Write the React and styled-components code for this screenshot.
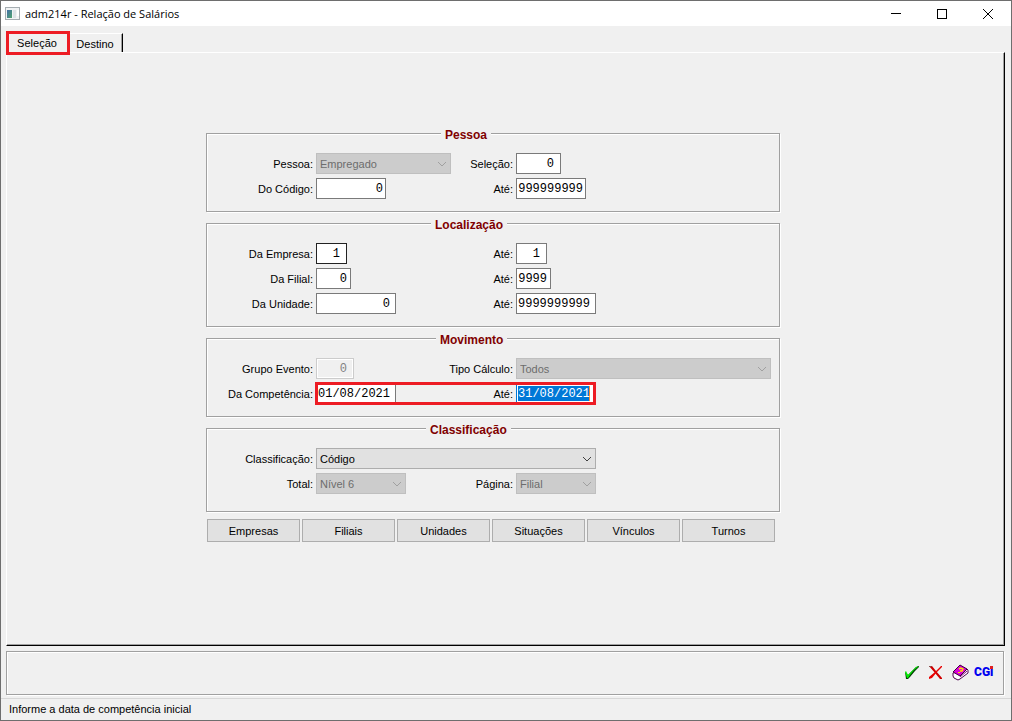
import styled, { createGlobalStyle } from "styled-components";

const GlobalStyle = createGlobalStyle`
  * {
    box-sizing: border-box;
  }

  html, body, #root {
    height: 100%;
    margin: 0;
  }

  body, button, select {
    font-family: "Liberation Sans", Arial, sans-serif;
    font-size: 11px;
    line-height: 16px;
    color: #000;
  }
`;

const Window = styled.div`
  height: 100%;
  display: flex;
  flex-direction: column;
  background: #f0f0f0;
  border: 1px solid #6e6e6e;
`;

const TitleBar = styled.header`
  display: flex;
  align-items: center;
  height: 25px;
  flex: none;
  background: #fff;

  h1 {
    flex: 1;
    margin: 0 0 0 5px;
    font-family: "Open Sans", "Noto Sans", sans-serif;
    font-size: 11px;
    font-weight: 400;
  }

  .app-icon {
    margin-left: 4px;
  }
`;

const WindowButton = styled.button`
  width: 46px;
  height: 25px;
  padding: 0;
  display: grid;
  place-items: center;
  border: 0;
  background: transparent;
`;

const Tabs = styled.nav`
  display: flex;
  flex: none;
  height: 26px;
  padding: 5px 5px 0;
`;

const Tab = styled.button`
  position: relative;
  height: 21px;
  padding: 3px 2px 0 0;
  width: ${({ $active }) => ($active ? 64 : 53)}px;
  border: 0;
  background: transparent;
  ${({ $active }) =>
    !$active &&
    `
    height: 19px;
    margin-top: 2px;
    padding-top: 1px;
    border-top: 1px solid #fff;
    border-right: 1px solid #000;
    box-shadow: inset -1px 0 #a0a0a0;
  `}
`;

const Highlight = styled.span`
  position: absolute;
  inset: ${({ $inset }) => $inset};
  border: 3px solid #ed1c24;
  pointer-events: none;
`;

const Page = styled.main`
  flex: 1;
  margin: 0 6px 0 5px;
  padding: 70px 25px 0 0;
  border: 1px solid #fff;
  border-right: 1px solid #000;
  border-bottom: 1px solid #000;
  box-shadow: inset -1px -1px #a0a0a0;
`;

const Form = styled.form`
  width: 574px;
  max-width: 100%;
  margin: 0 auto;
`;

const Group = styled.fieldset`
  height: ${({ $height }) => $height}px;
  margin: 0 0 1px;
  padding: 0;
  border: 1px solid #a0a0a0;
  box-shadow: 1px 1px #fff, inset 1px 1px #fff;
  display: block;

  legend {
    margin-left: ${({ $indent }) => $indent}px;
    height: 20px;
    padding: 5px 4px 0;
    background: #f0f0f0;
    color: #800000;
    font-size: 12px;
    line-height: 15px;
    font-weight: 700;
  }
`;

const Row = styled.div`
  position: relative;
  display: grid;
  grid-template-columns: 106px 135px 59px 1fr;
  column-gap: 3px;
  align-items: center;
  height: 21px;
  margin-top: 4px;

  legend + & {
    margin-top: 10px;
  }
`;

const Label = styled.label`
  justify-self: end;
  white-space: nowrap;
`;

const TextInput = styled.input`
  width: ${({ $width }) => $width}px;
  height: 21px;
  margin: 0;
  padding: 2px ${({ $width, $digits }) => $width - 3 - Math.ceil($digits * 7.2)}px 2px 1px;
  border: 1px solid ${({ $dark }) => ($dark ? "#222" : "#7a7a7a")};
  border-radius: 0;
  background: #fff;
  color: #000;
  font-family: "Liberation Mono", monospace;
  font-size: 12px;
  line-height: 15px;
  text-align: right;

  &:disabled {
    border-color: #ccc;
    background: #f0f0f0;
    color: #838383;
    box-shadow: inset 0 0 0 1px #fff;
  }
`;

const SelectedInput = styled(TextInput)`
  border-color: #0078d7;
  background: linear-gradient(to left, #ff8728 1px, #0078d7 1px) content-box, #fff;
  color: #fff;
`;

const SelectBox = styled.span`
  position: relative;
  display: block;
  width: ${({ $width }) => $width}px;
  ${({ $wide }) => $wide && "grid-column: 2 / -1;"}

  select {
    appearance: none;
    display: block;
    width: 100%;
    height: 21px;
    padding: 0 20px 0 3px;
    border: 1px solid #adadad;
    border-radius: 0;
    background: #e1e1e1;
    opacity: 1;
  }

  select:disabled {
    border-color: #bfbfbf;
    background: #ccc;
    color: #6d6d6d;
  }

  svg {
    position: absolute;
    right: 4px;
    top: 8px;
    stroke: ${({ $disabled }) => ($disabled ? "#a0a0a0" : "#404040")};
    pointer-events: none;
  }
`;

const ButtonRow = styled.div`
  display: flex;
  gap: 2px;
  padding: 6px 5px 0 1px;

  button {
    flex: 1;
    height: 23px;
    padding: 0;
    border: 1px solid #adadad;
    background: #e1e1e1;
  }
`;

const ActionBar = styled.section`
  display: flex;
  align-items: center;
  justify-content: flex-end;
  gap: 4px;
  flex: none;
  height: 44px;
  margin: 5px 7px 0 5px;
  padding: 0 11px 2px 0;
  border: 1px solid #a0a0a0;
  box-shadow: 1px 1px #fff, inset 1px 1px #fff;
`;

const IconButton = styled.button`
  width: 20px;
  height: 20px;
  padding: 0;
  border: 0;
  background: transparent;
  display: grid;
  place-items: center;
`;

const CgiButton = styled(IconButton)`
  position: relative;
  width: 18px;
  color: #0000f0;
  font-family: Roboto, "Liberation Sans", sans-serif;
  font-size: 12px;
  font-weight: 900;

  &::after {
    content: "";
    position: absolute;
    top: 4px;
    right: -1px;
    width: 3px;
    height: 3px;
    background: #e02020;
  }
`;

const StatusBar = styled.footer`
  flex: none;
  height: 22px;
  margin-top: 3px;
  padding: 2px 8px 0;
  border-top: 1px solid #d7d7d7;
`;

const AppIcon = () => (
  <svg className="app-icon" width="15" height="13" viewBox="0 0 15 13" aria-hidden="true">
    <defs>
      <linearGradient id="screen" x1="0" y1="0" x2="1" y2="1">
        <stop offset="0" stopColor="#4470a8" />
        <stop offset="1" stopColor="#4fa36d" />
      </linearGradient>
    </defs>
    <rect x=".5" y=".5" width="14" height="12" fill="#f1f3f4" stroke="#a5adb1" />
    <rect x="2" y="3" width="5" height="8" fill="url(#screen)" />
    <rect x="8" y="3" width="3" height="8" fill="#dde3e6" />
    <rect x="12" y="3" width="2" height="6" fill="#fff" />
  </svg>
);

const CheckIcon = () => (
  <svg width="14" height="13" viewBox="0 0 14 13" aria-hidden="true">
    <path d="M0 6L3 9L11 1L14 0V1L10 5L5 11L3 13H1Z" fill="#064006" />
    <path d="M0 6L1 5L3 9L7 5L10 2L13 0V1L9 4L5 9L3 12H2Z" fill="#00f000" />
  </svg>
);

const CancelIcon = () => (
  <svg width="14" height="13" viewBox="0 0 14 13" aria-hidden="true">
    <path d="M0 0H3L7 5L13 12V13H11L6 7Z" fill="#d00000" />
    <path d="M12 0H13V1L8 6L3 12L0 13V11L6 6Z" fill="#e80000" />
    <path d="M0 0H3L2 1H0Z" fill="#8a5050" />
  </svg>
);

const BookIcon = () => (
  <svg width="17" height="17" viewBox="0 0 17 17" aria-hidden="true">
    <path d="M1 9L15 5L16 6V9L8 15L6 16L2 14L1 12Z" fill="#fff" stroke="#500050" />
    <path d="M1 8L8 1L15 5L8 12Z" fill="#d800d8" stroke="#400040" />
    <path d="M8 13L15 7" stroke="#800080" />
    <path d="M7 5L9 4L11 5L10 7L8 7" fill="none" stroke="#ffe000" strokeWidth="1.5" />
    <rect x="6" y="8" width="2" height="1" fill="#ffe000" />
  </svg>
);

const Field = ({ id, label, as: Input = TextInput, ...props }) => (
  <>
    <Label htmlFor={id}>{label}</Label>
    <Input id={id} {...props} />
  </>
);

const SelectField = ({ id, label, width, value, wide, disabled }) => (
  <>
    <Label htmlFor={id}>{label}</Label>
    <SelectBox $width={width} $wide={wide} $disabled={disabled}>
      <select id={id} disabled={disabled}>
        <option>{value}</option>
      </select>
      <svg width="10" height="6" viewBox="0 0 10 6" fill="none" aria-hidden="true">
        <path d="M1 1L5 5L9 1" />
      </svg>
    </SelectBox>
  </>
);

const filters = ["Empresas", "Filiais", "Unidades", "Situações", "Vínculos", "Turnos"];

const App = () => (
  <>
    <GlobalStyle />
    <Window>
      <TitleBar>
        <AppIcon />
        <h1>adm214r - Relação de Salários</h1>
        <WindowButton aria-label="Minimizar">
          <svg width="10" height="10" stroke="#000">
            <path d="M0 4.5H10" />
          </svg>
        </WindowButton>
        <WindowButton aria-label="Maximizar">
          <svg width="10" height="10" fill="none" stroke="#000">
            <rect x=".5" y=".5" width="9" height="9" />
          </svg>
        </WindowButton>
        <WindowButton aria-label="Fechar">
          <svg width="10" height="10" stroke="#000">
            <path d="M0 0L10 10M10 0L0 10" />
          </svg>
        </WindowButton>
      </TitleBar>

      <Tabs>
        <Tab $active>
          Seleção
          <Highlight $inset="0 0 -3px 0" />
        </Tab>
        <Tab>Destino</Tab>
      </Tabs>

      <Page>
        <Form onSubmit={(e) => e.preventDefault()}>
          <Group $height={89} $indent={234}>
            <legend>Pessoa</legend>
            <Row>
              <SelectField id="pessoa" label="Pessoa:" width={135} value="Empregado" disabled />
              <Field id="selecao" label="Seleção:" $width={45} $digits={5} defaultValue="0" />
            </Row>
            <Row>
              <Field id="codigo" label="Do Código:" $width={70} $digits={9} defaultValue="0" />
              <Field id="codigo-ate" label="Até:" $width={70} $digits={9} defaultValue="999999999" />
            </Row>
          </Group>

          <Group $height={114} $indent={224}>
            <legend>Localização</legend>
            <Row>
              <Field id="empresa" label="Da Empresa:" $width={31} $digits={3} $dark defaultValue="1" />
              <Field id="empresa-ate" label="Até:" $width={31} $digits={3} defaultValue="1" />
            </Row>
            <Row>
              <Field id="filial" label="Da Filial:" $width={35} $digits={4} defaultValue="0" />
              <Field id="filial-ate" label="Até:" $width={35} $digits={4} defaultValue="9999" />
            </Row>
            <Row>
              <Field id="unidade" label="Da Unidade:" $width={80} $digits={10} defaultValue="0" />
              <Field id="unidade-ate" label="Até:" $width={80} $digits={10} defaultValue="9999999999" />
            </Row>
          </Group>

          <Group $height={89} $indent={229}>
            <legend>Movimento</legend>
            <Row>
              <Field id="grupo" label="Grupo Evento:" $width={38} $digits={4} defaultValue="0" disabled />
              <SelectField id="tipo" label="Tipo Cálculo:" width={255} value="Todos" disabled />
            </Row>
            <Row>
              <Field id="competencia" label="Da Competência:" $width={80} $digits={10} defaultValue="01/08/2021" />
              <Field
                id="competencia-ate"
                label="Até:"
                as={SelectedInput}
                $width={80}
                $digits={10}
                defaultValue="31/08/2021"
              />
              <Highlight $inset="-1px 183px -1px 108px" />
            </Row>
          </Group>

          <Group $height={94} $indent={219}>
            <legend>Classificação</legend>
            <Row>
              <SelectField id="classificacao" label="Classificação:" width={280} value="Código" wide />
            </Row>
            <Row>
              <SelectField id="total" label="Total:" width={90} value="Nível 6" disabled />
              <SelectField id="pagina" label="Página:" width={80} value="Filial" disabled />
            </Row>
          </Group>

          <ButtonRow>
            {filters.map((name) => (
              <button key={name} type="button">
                {name}
              </button>
            ))}
          </ButtonRow>
        </Form>
      </Page>

      <ActionBar>
        <IconButton aria-label="Confirmar">
          <CheckIcon />
        </IconButton>
        <IconButton aria-label="Cancelar">
          <CancelIcon />
        </IconButton>
        <IconButton aria-label="Ajuda">
          <BookIcon />
        </IconButton>
        <CgiButton>CGi</CgiButton>
      </ActionBar>
      <StatusBar>Informe a data de competência inicial</StatusBar>
    </Window>
  </>
);

export default App;
